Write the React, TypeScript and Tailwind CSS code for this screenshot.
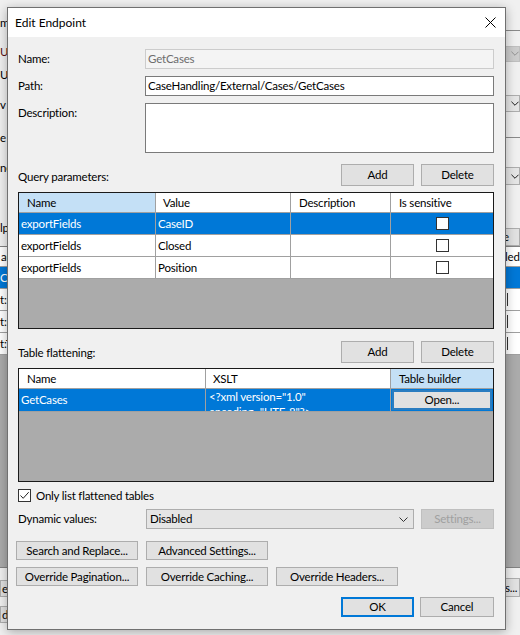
import React from "react";

type Kids = { children?: React.ReactNode; className?: string };

// classic WinForms push button
const Btn = ({ children, className = "" }: Kids) => (
  <div className={`flex items-center justify-center bg-[#e1e1e1] border border-[#adadad] text-black whitespace-nowrap ${className}`}>
    {children}
  </div>
);

const Chevron = ({ color = "#000" }: { color?: string }) => (
  <svg width="9" height="5" viewBox="0 0 9 5">
    <path d="M0.5 0.5 L4.5 4.5 L8.5 0.5" fill="none" stroke={color} strokeWidth="1" />
  </svg>
);

const Box = ({ checked = false }: { checked?: boolean }) => (
  <div className="w-[13px] h-[13px] border border-[#333333] bg-white flex items-center justify-center shrink-0">
    {checked && (
      <svg width="11" height="11" viewBox="0 0 11 11">
        <path d="M1.5 5.5 L4.2 8.3 L9.7 2.2" fill="none" stroke="#222" strokeWidth="1" />
      </svg>
    )}
  </div>
);

function BackgroundWindow() {
  const rows = ["t:D", "t:F", "t:T"];
  return (
    <div className="flex flex-col h-full">
      {/* form fields of the window behind, mostly covered */}
      <div className="h-[246px] flex justify-between">
        <div className="w-[20px] flex flex-col leading-[16px]">
          <div className="mt-[15px] h-[16px]">m</div>
          <div className="mt-[13px] h-[16px] text-[#5a1010]">U</div>
          <div className="mt-[7px] h-[16px]">U</div>
          <div className="mt-[14px] h-[16px]">v</div>
          <div className="mt-[17px] h-[16px]">e</div>
          <div className="mt-[14px] h-[16px]">ne</div>
          <div className="mt-[44px] h-[16px]">lp</div>
        </div>
        <div className="w-[20px] flex flex-col">
          <div className="mt-[11px] h-[21px] border-b border-[#8a8a8a]" />
          <div className="mt-[15px] h-[17px] bg-[#cccccc] border border-[#bfbfbf] flex items-center pl-[10px]">
            <Chevron color="#8a8a8a" />
          </div>
          <div className="mt-[33px] h-[18px] bg-[#e5e5e5] border border-[#adadad] flex items-center pl-[10px]">
            <Chevron />
          </div>
          <div className="mt-[15px] h-[12px] border-b border-[#8a8a8a]" />
          <div className="mt-[29px] h-[19px] bg-[#e5e5e5] border border-[#adadad] flex items-center pl-[10px]">
            <Chevron />
          </div>
          <Btn className="mt-[43px] h-[19px] justify-start! pl-[2px]">e</Btn>
        </div>
      </div>

      {/* grid of the window behind */}
      <div className="h-[322px] flex flex-col border-y border-[#828282] bg-[#ababab]">
        <div className="h-[20px] flex justify-between items-center bg-white border-b border-[#a0a0a0]">
          <span className="pl-[1px]">ar</span>
          <span className="w-[15px]">led</span>
        </div>
        <div className="h-[22px] flex justify-between items-center bg-[#0078d7] text-white border-b border-[#a0a0a0]">
          <span>C</span>
          <span className="w-[15px]" />
        </div>
        {rows.map((r) => (
          <div key={r} className="h-[22px] flex justify-between items-center bg-white border-b border-[#a0a0a0]">
            <span>{r}</span>
            <div className="w-[15px] flex">
              <div className="w-[3px] h-[13px] border-r border-[#333]" />
            </div>
          </div>
        ))}
      </div>

      <div className="flex-1 flex justify-between">
        <div className="w-[20px] flex flex-col">
          <Btn className="mt-[12px] h-[17px] justify-start! pl-[1px]">e</Btn>
          <Btn className="mt-[9px] h-[17px] justify-start! pl-[1px]">dv</Btn>
        </div>
        <Btn className="mt-[10px] w-[18px] h-[19px] justify-start! pl-[2px]">s...</Btn>
      </div>
    </div>
  );
}

function Dialog() {
  const params = [
    { name: "exportFields", value: "CaseID", sel: true },
    { name: "exportFields", value: "Closed", sel: false },
    { name: "exportFields", value: "Position", sel: false },
  ];
  const cell = "border-r border-b border-[#a0a0a0] flex items-center overflow-hidden whitespace-nowrap";

  return (
    <div className="absolute left-[7px] top-[7px] w-[499px] h-[623px] flex flex-col border border-[#707070] bg-[#f0f0f0] shadow-[0_2px_10px_rgba(0,0,0,0.3)]">
      <div className="h-[29px] shrink-0 bg-white flex items-center justify-between pl-[7px] pr-[9px]">
        <span className="text-[12px] tracking-normal">Edit Endpoint</span>
        <svg width="11" height="11" viewBox="0 0 11 11">
          <path d="M0.5 0.5 L10.5 10.5 M10.5 0.5 L0.5 10.5" stroke="#000" strokeWidth="1" />
        </svg>
      </div>

      <div className="flex flex-col pl-[10px] pr-[11px]">
        <div className="mt-[12px] h-[20px] flex items-center">
          <div className="w-[127px]">Name:</div>
          <div className="flex-1 h-full flex items-center px-[2px] border border-[#cccccc] bg-[#f4f4f4] text-[#6d6d6d]">GetCases</div>
        </div>
        <div className="mt-[7px] h-[20px] flex items-center">
          <div className="w-[127px]">Path:</div>
          <div className="flex-1 h-full flex items-center px-[2px] border border-[#7a7a7a] bg-white">CaseHandling/External/Cases/GetCases</div>
        </div>
        <div className="mt-[7px] h-[50px] flex">
          <div className="w-[127px] pt-[2px] leading-[16px]">Description:</div>
          <div className="flex-1 h-full border border-[#7a7a7a] bg-white" />
        </div>

        <div className="mt-[11px] h-[22px] flex items-center gap-[7px]">
          <div className="flex-1 pt-[4px]">Query parameters:</div>
          <Btn className="w-[73px] h-full">Add</Btn>
          <Btn className="w-[73px] h-full">Delete</Btn>
        </div>

        {/* query parameter grid */}
        <div className="mt-[6px] h-[137px] flex flex-col border border-[#1a1a1a] bg-[#ababab]">
          <div className="grid grid-cols-[137px_135px_100px_1fr] h-[20px] bg-white">
            <div className={`${cell} pl-[8px] bg-[#c4e0f6]`}>Name</div>
            <div className={`${cell} pl-[7px]`}>Value</div>
            <div className={`${cell} pl-[8px]`}>Description</div>
            <div className={`${cell} pl-[8px] border-r-0`}>Is sensitive</div>
          </div>
          {params.map((p, i) => (
            <div
              key={i}
              className={`grid grid-cols-[137px_135px_100px_1fr] h-[22px] ${p.sel ? "bg-[#0078d7] text-white" : "bg-white"}`}
            >
              <div className={`${cell} pl-[2px]`}>{p.name}</div>
              <div className={`${cell} pl-[2px]`}>{p.value}</div>
              <div className={cell} />
              <div className={`${cell} border-r-0 justify-center`}>
                <Box />
              </div>
            </div>
          ))}
        </div>

        <div className="mt-[12px] h-[22px] flex items-center gap-[7px]">
          <div className="flex-1 pt-[2px]">Table flattening:</div>
          <Btn className="w-[73px] h-full">Add</Btn>
          <Btn className="w-[73px] h-full">Delete</Btn>
        </div>

        {/* table flattening grid */}
        <div className="mt-[5px] h-[114px] flex flex-col border border-[#1a1a1a] bg-[#ababab]">
          <div className="grid grid-cols-[187px_185px_1fr] h-[20px] bg-white">
            <div className={`${cell} pl-[8px]`}>Name</div>
            <div className={`${cell} pl-[7px]`}>XSLT</div>
            <div className={`${cell} pl-[8px] border-r-0 bg-[#c4e0f6]`}>Table builder</div>
          </div>
          <div className="grid grid-cols-[187px_185px_1fr] h-[22px] bg-[#0078d7] text-white">
            <div className={`${cell} pl-[2px]`}>GetCases</div>
            <div className="border-r border-b border-[#a0a0a0] overflow-hidden pl-[3px] leading-[15px]">
              <div>{'<?xml version="1.0"'}</div>
              <div>{'encoding="UTF-8"?>'}</div>
            </div>
            <div className="border-b border-[#a0a0a0] p-[1px]">
              <div className="h-full flex items-center justify-center bg-[#e1e1e1] border-2 border-[#2b7dc0] text-black">Open...</div>
            </div>
          </div>
        </div>

        <div className="mt-[7px] h-[13px] flex items-center gap-[5px]">
          <Box checked />
          <span>Only list flattened tables</span>
        </div>

        <div className="mt-[7px] h-[20px] flex items-center">
          <div className="w-[128px]">Dynamic values:</div>
          <div className="flex-1 h-full flex items-center justify-between pl-[3px] pr-[5px] bg-[#e5e5e5] border border-[#adadad]">
            <span>Disabled</span>
            <Chevron color="#333" />
          </div>
          <div className="ml-[7px] w-[73px] h-full flex items-center justify-center bg-[#cccccc] border border-[#bfbfbf] text-[#a0a0a0]">Settings...</div>
        </div>

        <div className="mt-[12px] -ml-[2px] h-[19px] flex gap-[8px]">
          <Btn className="w-[122px] h-full">Search and Replace...</Btn>
          <Btn className="w-[122px] h-full">Advanced Settings...</Btn>
        </div>
        <div className="mt-[7px] -ml-[2px] h-[19px] flex gap-[8px]">
          <Btn className="w-[122px] h-full">Override Pagination...</Btn>
          <Btn className="w-[122px] h-full">Override Caching...</Btn>
          <Btn className="w-[122px] h-full">Override Headers...</Btn>
        </div>

        <div className="mt-[11px] h-[20px] flex justify-end gap-[6px]">
          <Btn className="w-[73px] h-full border-2! border-[#0078d7]!">OK</Btn>
          <Btn className="w-[74px] h-full">Cancel</Btn>
        </div>
      </div>
    </div>
  );
}

export default function App() {
  return (
    <div className="relative w-[520px] h-[635px] overflow-hidden bg-[#f0f0f0] font-['Lato',sans-serif] text-[11.5px] tracking-[-0.2px] leading-[16px] text-black">
      <BackgroundWindow />
      <Dialog />
    </div>
  );
}
